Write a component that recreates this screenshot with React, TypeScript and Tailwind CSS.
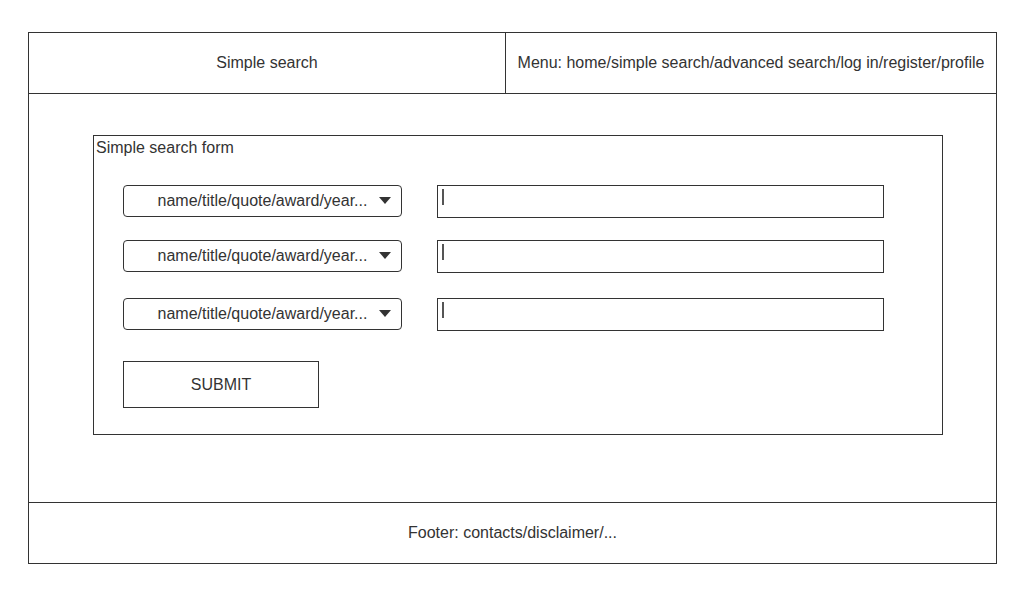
import React from "react";

function Select() {
  return (
    <div className="relative flex h-[32px] w-[279px] items-center justify-center rounded-[4px] border border-[#333333] text-[16px] text-[#333333]">
      <span className="leading-[18px]">name/title/quote/award/year...</span>
      <svg className="absolute right-[10px] top-[11px]" width="12" height="8" viewBox="0 0 12 8">
        <polygon points="0,0 12,0 6,7" fill="#333333" />
      </svg>
    </div>
  );
}

function TextInput() {
  return (
    <div className="relative h-[33px] w-[447px] border border-[#333333]">
      <div className="absolute left-[4px] top-[3px] h-[16px] w-[2px] bg-[#555555]" />
    </div>
  );
}

function Row({ className }: { className?: string }) {
  return (
    <div className={"flex items-start gap-[35px] pl-[29px] " + (className ?? "")}>
      <Select />
      <TextInput />
    </div>
  );
}

export default function App() {
  return (
    <div className="min-h-[600px] w-[1024px] bg-white pl-[28px] pt-[32px] text-[#333333]" style={{ fontFamily: '"Liberation Sans", Arial, sans-serif' }}>
      <div className="flex h-[532px] w-[969px] flex-col border border-[#333333]">
        <div className="flex h-[61px] shrink-0 border-b border-[#333333] text-[16px]">
          <div className="flex w-[477px] shrink-0 items-center justify-center border-r border-[#333333]">
            Simple search
          </div>
          <div className="flex flex-1 items-center justify-center">
            Menu: home/simple search/advanced search/log in/register/profile
          </div>
        </div>
        <div className="h-[408px] shrink-0 pl-[64px] pt-[41px]">
          <div className="flex h-[300px] w-[850px] flex-col border border-[#333333]">
            <div className="h-[49px] pl-[2px] pt-[3px] text-[16px] leading-[18px]">Simple search form</div>
            <Row />
            <Row className="mt-[22px]" />
            <Row className="mt-[25px]" />
            <div className="ml-[29px] mt-[30px] flex h-[47px] w-[196px] items-center justify-center border border-[#333333] text-[16px]">
              SUBMIT
            </div>
          </div>
        </div>
        <div className="flex flex-1 items-center justify-center border-t border-[#333333] text-[16px]">
          Footer: contacts/disclaimer/...
        </div>
      </div>
    </div>
  );
}
